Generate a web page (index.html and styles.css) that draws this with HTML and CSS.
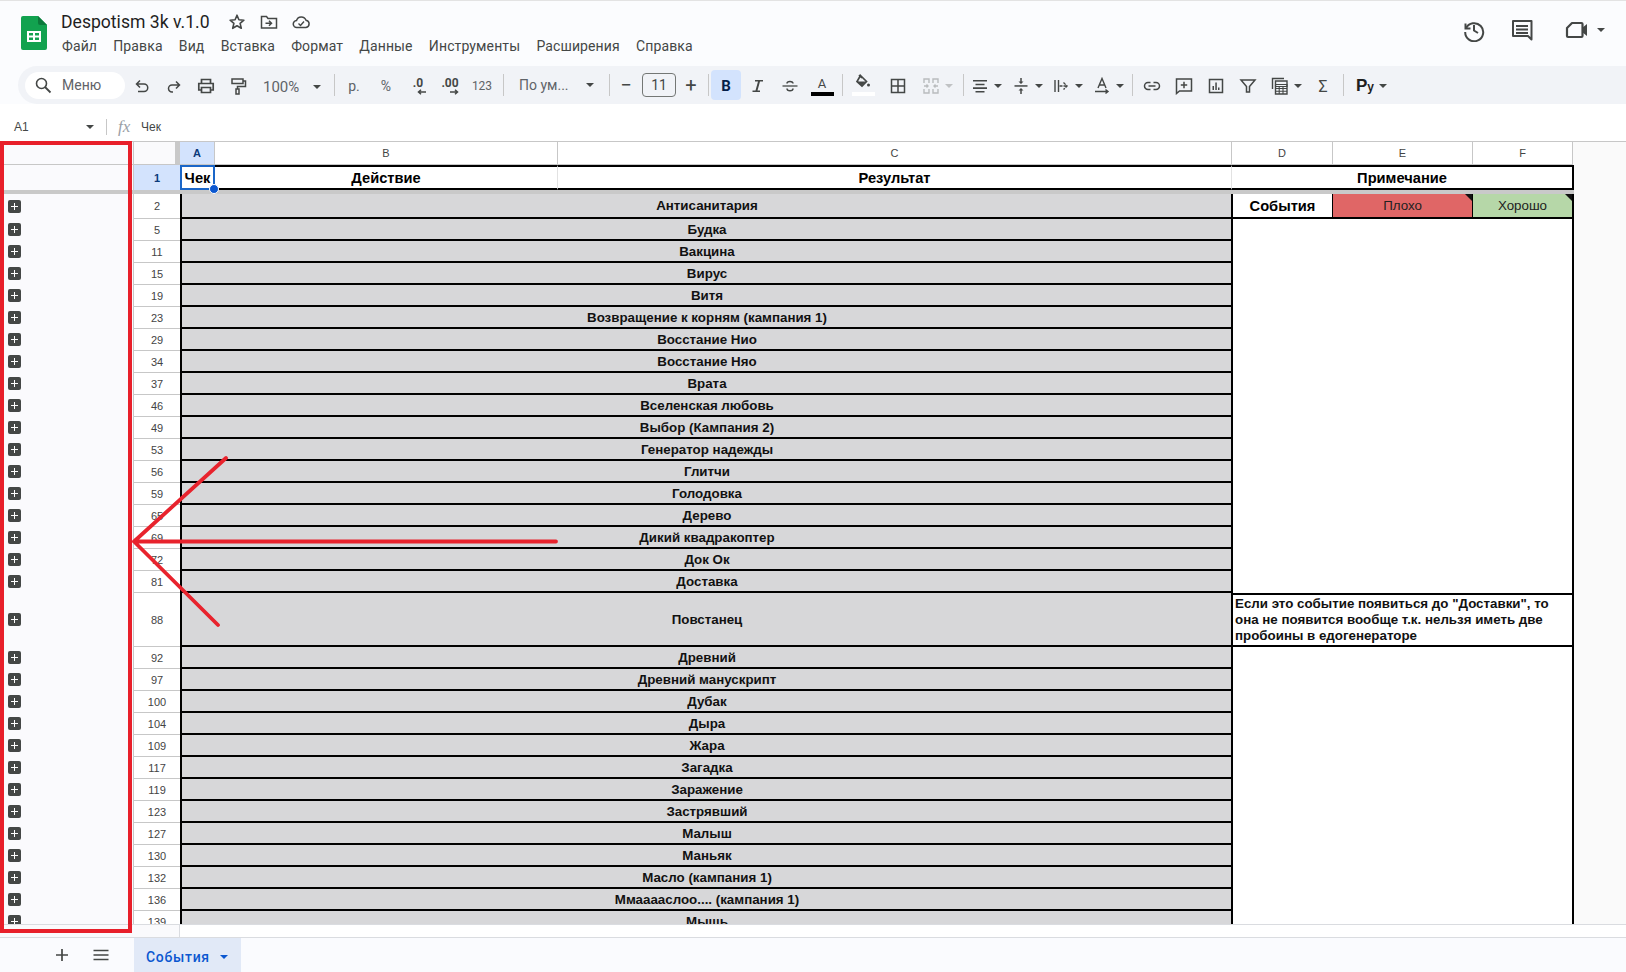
FILE: index.html
```html
<!DOCTYPE html>
<html lang="ru">
<head>
<meta charset="utf-8">
<title>Despotism 3k v.1.0</title>
<link rel="stylesheet" href="styles.css">
</head>
<body>
<div class="app">
  <header class="titlebar">
    <svg class="logo" viewBox="0 0 26 34"><path d="M2 0h15l9 9v23a2 2 0 0 1-2 2H2a2 2 0 0 1-2-2V2a2 2 0 0 1 2-2z" fill="#12a24f"/><path d="M17 0l9 9h-7a2 2 0 0 1-2-2z" fill="#0b7a3b"/><path d="M6 15h14v11H6z M8 17v2.5h4V17z M14 17v2.5h4V17z M8 21.500v2.500h4v-2.500z M14 21.500v2.500h4v-2.500z" fill="#fff" fill-rule="evenodd"/></svg>
    <div class="docinfo">
      <div class="docline">
        <span class="doctitle">Despotism 3k v.1.0</span>
        <svg class="ticon star" viewBox="0 0 18 18"><path d="M9 2.200l1.900 4.600 5 .4-3.800 3.200 1.200 4.900L9 12.700l-4.300 2.600 1.200-4.900-3.800-3.200 5-.4z" fill="none" stroke="#444746" stroke-width="1.600" stroke-linejoin="round"/></svg>
        <svg class="ticon" viewBox="0 0 18 18"><path d="M1.500 15V3.500h5l1.500 2h8.500V15z" fill="none" stroke="#444746" stroke-width="1.500"/><path d="M5.500 10.300h6M9 7.800l2.500 2.500L9 12.800" fill="none" stroke="#444746" stroke-width="1.500"/></svg>
        <svg class="ticon" viewBox="0 0 18 18"><path d="M5 14.500a3.500 3.500 0 0 1-.5-7A5 5 0 0 1 14 7.200a3.700 3.700 0 0 1 0 7.300z" fill="none" stroke="#444746" stroke-width="1.500"/><path d="M6.500 10.500l2 2 3.500-4" fill="none" stroke="#444746" stroke-width="1.400"/></svg>
      </div>
      <nav class="menu">
        <span>Файл</span><span>Правка</span><span>Вид</span><span>Вставка</span><span>Формат</span><span>Данные</span><span>Инструменты</span><span>Расширения</span><span>Справка</span>
      </nav>
    </div>
    <div class="actions">
      <svg class="act" viewBox="0 0 24 24"><path d="M3.500 5.500v5h5" fill="none" stroke="#444746" stroke-width="2"/><path d="M4 10.500A9 9 0 1 1 3.200 14" fill="none" stroke="#444746" stroke-width="2"/><path d="M12 7v5.500l4 2.500" fill="none" stroke="#444746" stroke-width="2"/></svg>
      <svg class="act act-c" viewBox="0 0 24 24"><path d="M3 3h18.500v18.500L18 18H3z" fill="none" stroke="#444746" stroke-width="2" stroke-linejoin="round"/><path d="M6 7h12v2H6zM6 10.500h12v2H6zM6 14h12v2H6z" fill="#444746"/></svg>
      <svg class="act act-v" viewBox="0 0 24 24"><path d="M8 5h9.500a1 1 0 0 1 1 1v12a1 1 0 0 1-1 1H4a1 1 0 0 1-1-1V10z" fill="none" stroke="#444746" stroke-width="2.200" stroke-linejoin="round"/><path d="M18 10l5-4v12l-5-4z" fill="#444746"/></svg>
      <i class="caret"></i>
    </div>
  </header>

  <div class="toolbar">
    <div class="search">
      <svg class="ic" viewBox="0 0 18 18"><circle cx="7.500" cy="7.500" r="5" fill="none" stroke="#444746" stroke-width="1.600"/><path d="M11 11l5.500 5.500" stroke="#444746" stroke-width="1.800"/></svg>
      <span>Меню</span>
    </div>
    <button class="tb"><svg class="ic" viewBox="0 0 18 18"><path d="M7 3.500L3.500 7 7 10.500M3.500 7H11a3.700 3.700 0 0 1 0 7.500H5" fill="none" stroke="#444746" stroke-width="1.500"/></svg></button>
    <button class="tb"><svg class="ic" viewBox="0 0 18 18"><path d="M11 4.500L14.500 8 11 11.500M14.500 8H7a3.500 3.500 0 0 0 0 7h1" fill="none" stroke="#444746" stroke-width="1.500"/></svg></button>
    <button class="tb"><svg class="ic" viewBox="0 0 18 18"><path d="M4.500 6V2.500h9V6M4.500 13H1.800V6.500h14.400V13h-2.700M4.500 10.500h9v5h-9z" fill="none" stroke="#444746" stroke-width="1.700"/></svg></button>
    <button class="tb"><svg class="ic" viewBox="0 0 18 18"><path d="M3 2h11v4.500H3zM14 4h2.500v5.500H8.500V12M7 12h3v5H7z" fill="none" stroke="#444746" stroke-width="1.500"/></svg></button>
    <div class="zoomctl"><span>100%</span><i class="caret"></i></div>
    <i class="sep s-zoom"></i>
    <button class="tb txt">р.</button>
    <button class="tb txt">%</button>
    <button class="tb dec"><span>.0</span><svg viewBox="0 0 10 6" class="darrow"><path d="M9 3H2M4 .8L1.500 3 4 5.200" fill="none" stroke="#444746" stroke-width="1.500"/></svg></button>
    <button class="tb dec"><span>.00</span><svg viewBox="0 0 10 6" class="darrow"><path d="M1 3h7M6 .8L8.500 3 6 5.200" fill="none" stroke="#444746" stroke-width="1.500"/></svg></button>
    <button class="tb txt small">123</button>
    <i class="sep s-num"></i>
    <div class="fontctl"><span>По ум...</span><i class="caret"></i></div>
    <i class="sep s-font"></i>
    <button class="tb sign">&#8722;</button>
    <div class="sizebox">11</div>
    <button class="tb sign plus">+</button>
    <i class="sep s-size"></i>
    <button class="tb bold">B</button>
    <button class="tb"><svg class="ic" viewBox="0 0 18 18"><path d="M6 3h8v1.500h-3L8.500 13.500H11V15H3.500v-1.500h3L9 4.500H6z" fill="#444746"/></svg></button>
    <button class="tb"><svg class="ic" viewBox="0 0 18 18"><path d="M1.500 9h15" stroke="#444746" stroke-width="1.300"/><path d="M6 6.500C6 4 12 3.800 12 6.500M6 11.500c0 3 6 3 6 0" fill="none" stroke="#444746" stroke-width="1.500"/></svg></button>
    <button class="tb colora"><span>A</span><i class="colorbar"></i></button>
    <i class="sep s-text"></i>
    <button class="tb fill"><svg class="ic" viewBox="0 0 18 18"><path d="M6.500 1.500l6 6L8 12 3 7.500zM5 1l3 3" fill="none" stroke="#444746" stroke-width="1.700"/><path d="M3.500 7.500h8.500L8 11.500z" fill="#444746"/><circle cx="14.500" cy="11" r="1.500" fill="#444746"/></svg><i class="fillbar"></i></button>
    <button class="tb mr1"><svg class="ic" viewBox="0 0 18 18"><path d="M2.500 2.500h13v13h-13zM9 2.500v13M2.500 9h13" fill="none" stroke="#444746" stroke-width="1.500"/></svg></button>
    <button class="tb drop merge"><svg class="ic" viewBox="0 0 18 18"><path d="M2 6V2h5v4M11 6V2h5v4M2 12v4h5v-4M11 12v4h5v-4M2 9h4M4.500 7.500L6 9l-1.500 1.500M16 9h-4M13.500 7.500L12 9l1.500 1.500" fill="none" stroke="#b9bcbe" stroke-width="1.400"/></svg><i class="caret pale"></i></button>
    <i class="sep s-merge"></i>
    <button class="tb drop"><svg class="ic" viewBox="0 0 18 18"><path d="M2 3h14v1.600H2zM4.500 6.700h9v1.600h-9zM2 10.300h14v1.600H2zM4.500 14h9v1.600h-9z" fill="#444746"/></svg><i class="caret"></i></button>
    <button class="tb drop ml1"><svg class="ic" viewBox="0 0 18 18"><path d="M2.500 8.200h13v1.500h-13z" fill="#444746"/><path d="M9 1v4M9 13v4" stroke="#444746" stroke-width="1.500"/><path d="M6.500 4.500h5L9 7zM6.500 13.500h5L9 11z" fill="#444746"/></svg><i class="caret"></i></button>
    <button class="tb drop"><svg class="ic" viewBox="0 0 18 18"><path d="M3 3v12M6.500 3v12" stroke="#444746" stroke-width="1.400"/><path d="M7.500 9H15M11.500 5.500L15 9l-3.500 3.500" fill="none" stroke="#444746" stroke-width="1.400" stroke-dasharray="3 1"/></svg><i class="caret"></i></button>
    <button class="tb drop ml1"><svg class="ic" viewBox="0 0 18 18"><path d="M5 11L9 1.500 13 11M6.200 8h5.600" fill="none" stroke="#444746" stroke-width="1.400"/><path d="M2 14.500h12.500M12.500 12.500l2.500 2-2.500 2" fill="none" stroke="#444746" stroke-width="1.400"/></svg><i class="caret"></i></button>
    <i class="sep s-rot"></i>
    <button class="tb"><svg class="ic" viewBox="0 0 18 18"><path d="M7.500 5.500H5a3.500 3.500 0 0 0 0 7h2.500M10.500 5.500H13a3.500 3.500 0 0 1 0 7h-2.500M5.500 9h7" fill="none" stroke="#444746" stroke-width="1.500"/></svg></button>
    <button class="tb"><svg class="ic" viewBox="0 0 18 18"><path d="M1.500 2h15v12H4.500l-3 2.500zM9 4.800v6.400M5.800 8h6.400" fill="none" stroke="#444746" stroke-width="1.500"/></svg></button>
    <button class="tb"><svg class="ic" viewBox="0 0 18 18"><path d="M2.500 2.500h13v13h-13z" fill="none" stroke="#444746" stroke-width="1.500"/><path d="M5.500 9h1.500v4H5.500zM8.300 5.500h1.500V13H8.300zM11 10.500h1.500V13H11z" fill="#444746"/></svg></button>
    <button class="tb"><svg class="ic" viewBox="0 0 18 18"><path d="M2 3h14l-5.500 6.500V15h-3V9.500z" fill="none" stroke="#444746" stroke-width="1.500"/></svg></button>
    <button class="tb drop func ml1"><svg class="ic" viewBox="0 0 18 18"><path d="M1.500 12V1.500H13" fill="none" stroke="#444746" stroke-width="1.400"/><path d="M4.500 4h11.500v13H4.500z" fill="none" stroke="#444746" stroke-width="1.400"/><path d="M4.500 7.500h11.500v2H4.500zM4.500 11.500h11.500M4.500 14.200h11.500M8.200 9.500V17M12 9.500V17" fill="none" stroke="#444746" stroke-width="1.100"/></svg><i class="caret"></i></button>
    <button class="tb sigma">&#931;</button>
    <i class="sep s-sig"></i>
    <button class="tb drop py"><b class="pylabel">Р<small>у</small></b><i class="caret"></i></button>
  </div>

  <div class="formula">
    <span class="namebox">A1</span><i class="caret"></i>
    <i class="fsep"></i>
    <span class="fx">fx</span>
    <span class="fval">Чек</span>
  </div>

  <section class="sheet">
    <div class="r-head">
      <div class="rail"></div>
      <div class="corner"></div>
      <div class="ch cA">A</div><div class="ch cB">B</div><div class="ch cC">C</div><div class="ch cD">D</div><div class="ch cE">E</div><div class="ch cF">F</div>
      <div class="ch-rest"></div>
    </div>
    <div class="r-first">
      <div class="rail"></div>
      <div class="rn sel">1</div>
      <div class="c1 cA active">Чек<i class="handle"></i></div>
      <div class="c1 cB">Действие</div>
      <div class="c1 cC">Результат</div>
      <div class="c1 cDEF">Примечание</div>
      <div class="ch-rest blank"></div>
    </div>
    <div class="freeze"></div>
    <div class="body">
      <div class="leftpart">
        <div class="row first"><div class="rail"><i class="pb"></i></div><div class="rn">2</div><div class="band">Антисанитария</div></div>
        <div class="row"><div class="rail"><i class="pb"></i></div><div class="rn">5</div><div class="band">Будка</div></div>
        <div class="row"><div class="rail"><i class="pb"></i></div><div class="rn">11</div><div class="band">Вакцина</div></div>
        <div class="row"><div class="rail"><i class="pb"></i></div><div class="rn">15</div><div class="band">Вирус</div></div>
        <div class="row"><div class="rail"><i class="pb"></i></div><div class="rn">19</div><div class="band">Витя</div></div>
        <div class="row"><div class="rail"><i class="pb"></i></div><div class="rn">23</div><div class="band">Возвращение к корням (кампания 1)</div></div>
        <div class="row"><div class="rail"><i class="pb"></i></div><div class="rn">29</div><div class="band">Восстание Нио</div></div>
        <div class="row"><div class="rail"><i class="pb"></i></div><div class="rn">34</div><div class="band">Восстание Няо</div></div>
        <div class="row"><div class="rail"><i class="pb"></i></div><div class="rn">37</div><div class="band">Врата</div></div>
        <div class="row"><div class="rail"><i class="pb"></i></div><div class="rn">46</div><div class="band">Вселенская любовь</div></div>
        <div class="row"><div class="rail"><i class="pb"></i></div><div class="rn">49</div><div class="band">Выбор (Кампания 2)</div></div>
        <div class="row"><div class="rail"><i class="pb"></i></div><div class="rn">53</div><div class="band">Генератор надежды</div></div>
        <div class="row"><div class="rail"><i class="pb"></i></div><div class="rn">56</div><div class="band">Глитчи</div></div>
        <div class="row"><div class="rail"><i class="pb"></i></div><div class="rn">59</div><div class="band">Голодовка</div></div>
        <div class="row"><div class="rail"><i class="pb"></i></div><div class="rn">65</div><div class="band">Дерево</div></div>
        <div class="row"><div class="rail"><i class="pb"></i></div><div class="rn">69</div><div class="band">Дикий квадракоптер</div></div>
        <div class="row"><div class="rail"><i class="pb"></i></div><div class="rn">72</div><div class="band">Док Ок</div></div>
        <div class="row"><div class="rail"><i class="pb"></i></div><div class="rn">81</div><div class="band">Доставка</div></div>
        <div class="row tall"><div class="rail"><i class="pb"></i></div><div class="rn">88</div><div class="band">Повстанец</div></div>
        <div class="row"><div class="rail"><i class="pb"></i></div><div class="rn">92</div><div class="band">Древний</div></div>
        <div class="row"><div class="rail"><i class="pb"></i></div><div class="rn">97</div><div class="band">Древний манускрипт</div></div>
        <div class="row"><div class="rail"><i class="pb"></i></div><div class="rn">100</div><div class="band">Дубак</div></div>
        <div class="row"><div class="rail"><i class="pb"></i></div><div class="rn">104</div><div class="band">Дыра</div></div>
        <div class="row"><div class="rail"><i class="pb"></i></div><div class="rn">109</div><div class="band">Жара</div></div>
        <div class="row"><div class="rail"><i class="pb"></i></div><div class="rn">117</div><div class="band">Загадка</div></div>
        <div class="row"><div class="rail"><i class="pb"></i></div><div class="rn">119</div><div class="band">Заражение</div></div>
        <div class="row"><div class="rail"><i class="pb"></i></div><div class="rn">123</div><div class="band">Застрявший</div></div>
        <div class="row"><div class="rail"><i class="pb"></i></div><div class="rn">127</div><div class="band">Малыш</div></div>
        <div class="row"><div class="rail"><i class="pb"></i></div><div class="rn">130</div><div class="band">Маньяк</div></div>
        <div class="row"><div class="rail"><i class="pb"></i></div><div class="rn">132</div><div class="band">Масло (кампания 1)</div></div>
        <div class="row"><div class="rail"><i class="pb"></i></div><div class="rn">136</div><div class="band">Ммааааслоо.... (кампания 1)</div></div>
        <div class="row"><div class="rail"><i class="pb"></i></div><div class="rn">139</div><div class="band">Мышь</div></div>
      </div>
      <div class="rightpart">
        <div class="legend">
          <div class="lg cD ev">События</div>
          <div class="lg cE bad">Плохо</div>
          <div class="lg cF good">Хорошо</div>
        </div>
        <div class="blank-a"></div>
        <div class="note">Если это событие появиться до "Доставки", то она не появится вообще т.к. нельзя иметь две пробоины в едогенераторе</div>
        <div class="blank-b"></div>
      </div>
      <div class="outside"></div>
    </div>
    <div class="scrollstrip"><div class="ss-left"></div><div class="ss-right"></div></div>
  </section>

  <footer class="tabs">
    <svg class="addsheet" viewBox="0 0 14 14"><path d="M7 1v12M1 7h12" stroke="#444746" stroke-width="1.700"/></svg>
    <svg class="allsheets" viewBox="0 0 16 12"><path d="M.500 1.500h15M.500 6h15M.500 10.500h15" stroke="#444746" stroke-width="1.700"/></svg>
    <div class="tab"><span>События</span><i class="caret blue"></i></div>
  </footer>

  <div class="redbox"></div>
  <svg class="arrow" viewBox="0 0 1626 972"><path d="M226 458L134 541.500L218 625M134 541.500H556" fill="none" stroke="#e8232d" stroke-width="3.800" stroke-linecap="round" stroke-linejoin="round"/></svg>
</div>
</body>
</html>
```

FILE: styles.css
```css
* { box-sizing: border-box; }
html, body { margin: 0; padding: 0; }
body { width: 1626px; height: 972px; overflow: hidden; background: #fbfcfe; font-family: Roboto, "Liberation Sans", sans-serif; color: #444746; }
.app { position: relative; width: 1626px; height: 972px; overflow: hidden; display: flex; flex-direction: column; border-top: 1px solid #e3e3e3; }
i { display: block; font-style: normal; }
button { border: 0; background: none; padding: 0; margin: 0; font-family: inherit; color: inherit; }

.caret { width: 0; height: 0; border-left: 4px solid transparent; border-right: 4px solid transparent; border-top: 4px solid #444746; flex: none; }
.caret.pale { border-top-color: #c0c2c4; }
.caret.blue { border-top-color: #0b57d0; }

.titlebar { height: 65px; flex: none; display: flex; align-items: flex-start; padding-left: 21px; }
.logo { width: 26px; height: 34px; margin-top: 15px; flex: none; }
.docinfo { margin-left: 14px; padding-top: 8px; }
.docline { display: flex; align-items: center; height: 26px; }
.doctitle { font-size: 17.600px; color: #1f1f1f; width: 167px; white-space: nowrap; }
.ticon { width: 18px; height: 18px; margin-right: 14px; flex: none; }
.menu { display: flex; margin-left: 1px; font-size: 14px; letter-spacing: .12px; color: #444746; height: 22px; align-items: center; }
.menu span { margin-right: 16.200px; white-space: nowrap; }
.actions { margin-left: auto; display: flex; align-items: center; height: 58px; padding-right: 21px; }
.act { width: 24px; height: 24px; margin-right: 24px; }
.act-v { width: 26px; margin-right: 8px; margin-left: 5px; }

.toolbar { height: 38px; flex: none; margin-left: 18px; background: #f1f3f7; border-radius: 19px 0 0 19px; display: flex; align-items: center; padding-left: 7px; }
.search { width: 100px; height: 27px; border-radius: 14px; background: #fff; display: flex; align-items: center; padding-left: 9px; font-size: 14px; color: #5f6368; margin-right: 1px; flex: none; }
.search span { margin-left: 10px; }
.ic { width: 18px; height: 18px; flex: none; display: block; }
.tb { width: 32px; height: 30px; display: flex; align-items: center; justify-content: center; flex: none; position: relative; padding-top: 2px; }
.ml1 { margin-left: 1px; }
.txt { font-size: 14px; color: #5f6368; }
.small { font-size: 12px; }
.dec { flex-direction: column; font-size: 12px; font-weight: 700; line-height: 11px; color: #444746; }
.darrow { width: 10px; height: 6px; margin-left: 7px; }
.zoomctl { width: 76px; display: flex; align-items: center; padding: 3px 0 0 9px; font-size: 15px; color: #5f6368; flex: none; }
.zoomctl .caret { margin-left: 14px; }
.sep { width: 1px; height: 22px; background: #c7c7c7; flex: none; }
.s-zoom { margin: 0 3px 0 4px; }
.s-num { margin: 0 4px 0 5px; }
.s-font { margin: 0 0 0 4px; }
.s-size { margin: 0 2px; }
.s-text { margin: 0 4px; }
.s-merge { margin: 0 4px 0 5px; }
.s-rot { margin: 0 3px 0 2px; }
.s-sig { margin: 0 4px; }
.fontctl { width: 97px; display: flex; align-items: center; padding-left: 11px; font-size: 14px; color: #5f6368; flex: none; }
.fontctl span { width: 67px; white-space: nowrap; }
.sign { font-size: 20px; color: #444746; font-weight: 400; padding-top: 0; }
.sizebox { width: 34px; height: 24px; border: 1px solid #747775; border-radius: 4px; display: flex; align-items: center; justify-content: center; font-size: 14px; color: #444746; flex: none; }
.plus { width: 30px; }
.bold { width: 30px; background: #d3e3fd; border-radius: 4px; font-weight: 700; font-size: 15px; color: #041e49; margin-right: 1px; }
.colora { flex-direction: column; font-size: 13px; line-height: 14px; }
.colorbar { width: 23px; height: 4px; background: #000; margin-top: 1px; }
.fill { flex-direction: column; padding-top: 0; }
.fillbar { width: 23px; height: 4px; background: #fff; margin-top: 0; }
.mr1 { margin: 0 1px 0 3px; }
.drop { width: 40px; justify-content: flex-start; padding-left: 3px; }
.drop .caret { margin-left: 5px; }
.merge { width: 43px; padding-left: 7px; }
.func { width: 44px; padding-left: 6px; }
.sigma { font-size: 16px; margin-left: -2px; }
.py { width: 46px; padding-left: 8px; }
.pylabel { font-size: 17px; color: #1f1f1f; width: 20px; text-align: left; font-family: "Liberation Sans", sans-serif; }
.pylabel small { font-size: 12px; }
.py .caret { margin-left: 3px; }

.formula { height: 37px; flex: none; background: #fff; display: flex; align-items: center; font-family: "Liberation Sans", sans-serif; font-size: 12px; color: #444746; padding: 8px 0 0 14px; }
.namebox { width: 72px; }
.fsep { width: 1px; height: 16px; background: #c7c7c7; margin-left: 12px; }
.fx { font-family: "Liberation Serif", serif; font-style: italic; font-size: 17px; color: #9aa0a6; margin-left: 11px; width: 23px; }
.fval { font-size: 12px; }

.sheet { flex: none; display: flex; flex-direction: column; height: 796px; font-family: "Liberation Sans", sans-serif; background: #fff; }
.r-head { height: 24px; display: flex; flex: none; border-top: 1px solid #c7c7c7; }
.r-first { height: 25px; display: flex; flex: none; }
.rail { width: 133px; flex: none; background: #fafafd; display: flex; align-items: center; padding-left: 8px; }
.row .rail { padding-bottom: 2px; }
.row.first .rail { padding-bottom: 0; }
.r-head .rail { border-bottom: 1px solid #c7c7c7; }
.corner { width: 47px; flex: none; background: #fafafc; border-right: 5px solid #c9c9c9; border-left: 1px solid #c7c7c7; border-bottom: 1px solid #c7c7c7; }
.cA { width: 35px; flex: none; }
.cB { width: 343px; flex: none; }
.cC { width: 674px; flex: none; }
.cD { width: 101px; flex: none; }
.cE { width: 140px; flex: none; }
.cF { width: 100px; flex: none; }
.ch { display: flex; align-items: center; justify-content: center; font-size: 11px; color: #444; background: #fff; border-right: 1px solid #c7c7c7; border-bottom: 1px solid #c7c7c7; }
.ch.cA { background: #d3e3fd; font-weight: 700; color: #0b3a7a; }
.ch-rest { flex: 1; background: #fafafa; }
.rn { width: 47px; flex: none; display: flex; align-items: center; justify-content: center; font-size: 11px; color: #444; background: #fff; border-bottom: 1px solid #c7c7c7; border-left: 1px solid #c7c7c7; }
.rn.sel { background: #d3e3fd; font-weight: 700; color: #0b3a7a; border-bottom: 0; }
.c1 { display: flex; align-items: center; justify-content: center; font-weight: 700; font-size: 14.670px; color: #000; background: #fff; border-top: 2px solid #000; border-bottom: 2px solid #000; border-right: 1px solid #e2e2e2; position: relative; height: 25px; }
.c1.cDEF { width: 342px; flex: none; border-right: 2px solid #000; }
.c1.active { border: 2px solid #1a66c8; }
.handle { position: absolute; right: -6px; bottom: -6px; width: 10px; height: 10px; border-radius: 50%; background: #0b57d0; border: 1px solid #fff; z-index: 2; }
.freeze { height: 4px; flex: none; background: #c9c9c9; border-right: 52px solid #fafafa; }

.body { height: 730px; flex: none; display: flex; overflow: hidden; }
.leftpart { width: 1232px; flex: none; }
.row { display: flex; height: 22px; }
.row.first { height: 25px; }
.row.tall { height: 54px; }
.pb { width: 13px; height: 13px; background: #444746; border-radius: 2px; position: relative; }
.pb::before { content: ""; position: absolute; left: 3px; right: 3px; top: 6px; height: 1px; background: #fff; }
.pb::after { content: ""; position: absolute; top: 3px; bottom: 3px; left: 6px; width: 1px; background: #fff; }
.band { width: 1052px; flex: none; display: flex; align-items: center; justify-content: center; background: #d7d7d9; border-left: 2px solid #000; border-bottom: 2px solid #000; font-weight: 700; font-size: 13.330px; color: #111; }
.rightpart { width: 343px; flex: none; display: flex; flex-direction: column; border-left: 2px solid #000; border-right: 2px solid #000; margin-left: -1px; background: #fff; }
.legend { display: flex; height: 25px; flex: none; border-bottom: 2px solid #000; }
.lg { display: flex; align-items: center; justify-content: center; font-size: 13.330px; color: #222; position: relative; }
.ev { width: 100px; font-weight: 700; font-size: 14.670px; color: #000; border-right: 1px solid #000; }
.bad { background: #e06666; border-right: 1px solid #000; }
.good { background: #b6d7a8; flex: 1; width: auto; }
.bad::after, .good::after { content: ""; position: absolute; right: 0; top: 0; border-top: 7px solid #111; border-left: 7px solid transparent; }
.blank-a { height: 374px; flex: none; }
.note { height: 54px; flex: none; border-top: 2px solid #000; border-bottom: 2px solid #000; padding: 1px 3px 0 2px; font-weight: 700; font-size: 13.330px; line-height: 16px; color: #111; }
.blank-b { flex: 1; }
.outside { flex: 1; background: #fafafa; }
.scrollstrip { height: 13px; flex: none; display: flex; border-top: 1px solid #dadce0; }
.ss-left { width: 180px; background: #fafafc; border-right: 1px solid #dadce0; }
.ss-right { flex: 1; background: #fff; }

.tabs { flex: 1; display: flex; align-items: center; background: #fafbfe; border-top: 1px solid #dadce0; padding-left: 55px; }
.addsheet { width: 14px; height: 14px; }
.allsheets { width: 16px; height: 12px; margin-left: 24px; }
.tab { margin-left: 25px; width: 107px; height: 34px; background: #e1e9f7; display: flex; align-items: center; padding: 3px 0 0 12px; font-size: 14px; font-weight: 500; color: #0b57d0; letter-spacing: .7px; }
.tab .caret { margin-left: 10px; }

.redbox { position: absolute; left: 0; top: 140px; width: 132px; height: 792px; border: 4px solid #e81f2a; pointer-events: none; }
.arrow { position: absolute; left: 0; top: -1px; width: 1626px; height: 972px; pointer-events: none; }
```
